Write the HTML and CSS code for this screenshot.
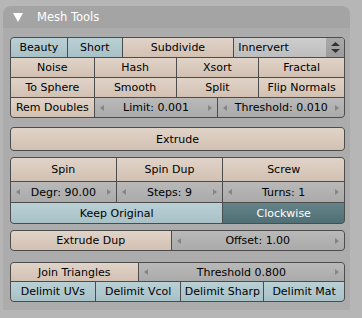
FILE: index.html
```html
<!DOCTYPE html>
<html lang="en">
<head>
    <meta charset="UTF-8">
    <title>Mesh Tools</title>
    <link rel="stylesheet" href="styles.css">
</head>
<body>
    <div class="panel">
        <div class="panel-header">
            <svg class="collapse" width="10" height="10" viewBox="0 0 10 10"><polygon points="0,1 10,1 5,10" fill="#fff"/></svg>
            <span>Mesh Tools</span>
        </div>

        <div class="panel-body">
            <!-- Subdivide / smoothing tools -->
            <div class="group">
                <div class="row row-subdiv">
                    <div class="btn tog">Beauty</div>
                    <div class="btn tog">Short</div>
                    <div class="btn">Subdivide</div>
                    <div class="btn menu">
                        <span class="menu-label">Innervert</span>
                        <span class="menu-arrows">
                            <svg width="9" height="11" viewBox="0 0 9 11"><polygon points="4.5,0 9,4 0,4" fill="#333"/><polygon points="0,7 9,7 4.5,11" fill="#333"/></svg>
                        </span>
                    </div>
                </div>
                <div class="row row-four">
                    <div class="btn">Noise</div>
                    <div class="btn">Hash</div>
                    <div class="btn">Xsort</div>
                    <div class="btn">Fractal</div>
                </div>
                <div class="row row-four">
                    <div class="btn">To Sphere</div>
                    <div class="btn">Smooth</div>
                    <div class="btn">Split</div>
                    <div class="btn">Flip Normals</div>
                </div>
                <div class="row row-doubles">
                    <div class="btn">Rem Doubles</div>
                    <div class="btn num"><i class="arr-l"></i><span class="val">Limit: 0.001</span><i class="arr-r"></i></div>
                    <div class="btn num"><i class="arr-l"></i><span class="val">Threshold: 0.010</span><i class="arr-r"></i></div>
                </div>
            </div>

            <div class="group gap-9">
                <div class="row row-tall">
                    <div class="btn">Extrude</div>
                </div>
            </div>

            <!-- Spin / screw -->
            <div class="group gap-6">
                <div class="row row-spin">
                    <div class="btn">Spin</div>
                    <div class="btn">Spin Dup</div>
                    <div class="btn">Screw</div>
                </div>
                <div class="row row-steps">
                    <div class="btn num"><i class="arr-l"></i><span class="val">Degr: 90.00</span><i class="arr-r"></i></div>
                    <div class="btn num"><i class="arr-l"></i><span class="val">Steps: 9</span><i class="arr-r"></i></div>
                    <div class="btn num"><i class="arr-l"></i><span class="val">Turns: 1</span><i class="arr-r"></i></div>
                </div>
                <div class="row row-keep">
                    <div class="btn tog">Keep Original</div>
                    <div class="btn tog on">Clockwise</div>
                </div>
            </div>

            <div class="group gap-6">
                <div class="row row-dup">
                    <div class="btn">Extrude Dup</div>
                    <div class="btn num"><i class="arr-l"></i><span class="val">Offset: 1.00</span><i class="arr-r"></i></div>
                </div>
            </div>

            <!-- Tris to quads -->
            <div class="group gap-11">
                <div class="row row-join">
                    <div class="btn">Join Triangles</div>
                    <div class="btn num"><i class="arr-l"></i><span class="val">Threshold 0.800</span><i class="arr-r"></i></div>
                </div>
                <div class="row row-delimit">
                    <div class="btn tog">Delimit UVs</div>
                    <div class="btn tog">Delimit Vcol</div>
                    <div class="btn tog">Delimit Sharp</div>
                    <div class="btn tog">Delimit Mat</div>
                </div>
            </div>
        </div>
    </div>
</body>
</html>
```

FILE: styles.css
```css
/* Global */
* {
    margin: 0;
    padding: 0;
    box-sizing: border-box;
}

body {
    background: #b6b6b6;
    font-family: 'DejaVu Sans', sans-serif;
    font-size: 11px;
    color: #000;
}

/* Panel */
.panel {
    margin: 6px 0 0 3px;
    width: 347px;
}

.panel-header {
    height: 22px;
    display: flex;
    align-items: center;
    padding-left: 10px;
    background: #a4a4a4;
    border-radius: 8px 8px 0 0;
    color: #fff;
    font-size: 11.5px;
}

.collapse {
    margin-right: 14px;
}

.panel-body {
    height: 282px;
    padding: 9px 5px 0 7px;
    background: #acacac;
}

/* Button groups */
.group {
    display: flex;
    flex-direction: column;
    gap: 1px;
    background: #4c4c4c;
    border: 1px solid #4c4c4c;
    border-radius: 4px;
    overflow: hidden;
}

.gap-6 { margin-top: 6px; }
.gap-9 { margin-top: 9px; }
.gap-11 { margin-top: 11px; }

.row {
    display: grid;
    gap: 1px;
    height: 19px;
}

.row-subdiv { grid-template-columns: 56fr 54fr 111fr 110fr; }
.row-four { grid-template-columns: 83fr 81fr 82fr 85fr; }
.row-doubles { grid-template-columns: 83fr 123fr 126fr; }
.row-tall { grid-template-columns: 1fr; height: 22px; }
.row-spin { grid-template-columns: 105fr 106fr 121fr; height: 23px; }
.row-steps { grid-template-columns: 105fr 106fr 121fr; height: 20px; }
.row-keep { grid-template-columns: 212fr 121fr; height: 20px; }
.row-dup { grid-template-columns: 160fr 173fr; }
.row-join { grid-template-columns: 127fr 206fr; height: 18px; }
.row-delimit { grid-template-columns: 84fr 85fr 82fr 80fr; }

/* Buttons */
.btn {
    display: flex;
    align-items: center;
    justify-content: center;
    white-space: nowrap;
    overflow: hidden;
    background: linear-gradient(#e0d3c8, #d2c1b3);
}

.tog {
    background: linear-gradient(#b9d0d5, #a8c1c7);
}

.tog.on {
    background: linear-gradient(#64848a, #506f75);
    color: #fff;
}

.num {
    justify-content: space-between;
    padding: 0 5px;
    background: linear-gradient(#b9b9b9, #aaaaaa);
}

.num .val {
    flex: 1;
    text-align: center;
}

.arr-l,
.arr-r {
    width: 0;
    height: 0;
    border-top: 3px solid transparent;
    border-bottom: 3px solid transparent;
}

.arr-l { border-right: 4px solid #858585; }
.arr-r { border-left: 4px solid #858585; }

.menu {
    justify-content: space-between;
    background: linear-gradient(#cdcdcd, #bebebe);
}

.menu-label {
    padding-left: 4px;
}

.menu-arrows {
    width: 18px;
    height: 100%;
    display: flex;
    align-items: center;
    justify-content: center;
    background: linear-gradient(#a9a9a9, #9c9c9c);
}
```
